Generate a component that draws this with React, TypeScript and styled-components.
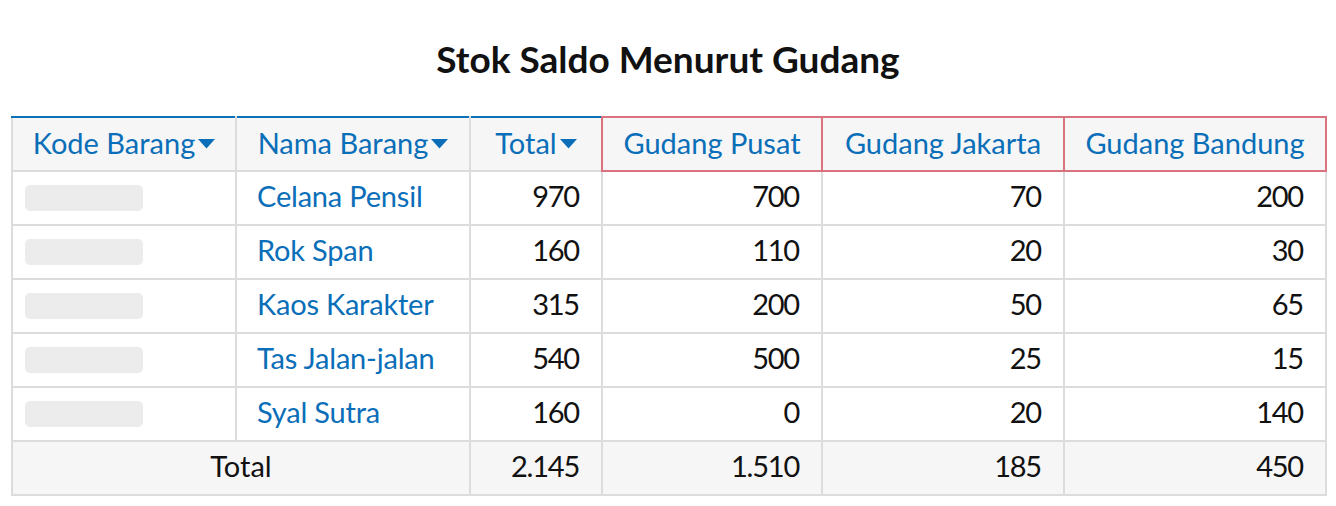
import styled, { createGlobalStyle } from "styled-components";

const GlobalStyle = createGlobalStyle`
    body {
        margin: 0;
        background: #ffffff;
        font-family: Lato, "Noto Sans", sans-serif;
    }
`

type Row = { nama: string; total: number; pusat: number; jakarta: number; bandung: number };

const rows: Row[] = [
    { nama: "Celana Pensil", total: 970, pusat: 700, jakarta: 70, bandung: 200 },
    { nama: "Rok Span", total: 160, pusat: 110, jakarta: 20, bandung: 30 },
    { nama: "Kaos Karakter", total: 315, pusat: 200, jakarta: 50, bandung: 65 },
    { nama: "Tas Jalan-jalan", total: 540, pusat: 500, jakarta: 25, bandung: 15 },
    { nama: "Syal Sutra", total: 160, pusat: 0, jakarta: 20, bandung: 140 },
];

const fmt = (n: number) => n.toLocaleString("de-DE");

const Caret = () => (
    <CaretIcon width="17" height="10" viewBox="0 0 17 10">
        <path d="M0 0 L17 0 L8.5 9.5 Z" fill="currentColor"/>
    </CaretIcon>
);

export default function App() {
    const sum = (k: keyof Omit<Row, "nama">) => rows.reduce((a, r) => a + r[k], 0);
    return (
        <Page>
            <GlobalStyle/>
            <Title>Stok Saldo Menurut Gudang</Title>
            <Table>
                <colgroup>
                    <col style={{width: 224}}/>
                    <col style={{width: 234}}/>
                    <col style={{width: 132}}/>
                    <col style={{width: 220}}/>
                    <col style={{width: 242}}/>
                    <col style={{width: 262}}/>
                </colgroup>
                <thead>
                    <tr>
                        <HeadCell>Kode Barang<Caret/></HeadCell>
                        <HeadCell>Nama Barang<Caret/></HeadCell>
                        <HeadCell>Total<Caret/></HeadCell>
                        <HeadCell $marked>Gudang Pusat</HeadCell>
                        <HeadCell $marked>Gudang Jakarta</HeadCell>
                        <HeadCell $marked>Gudang Bandung</HeadCell>
                    </tr>
                </thead>
                <tbody>
                    {rows.map((r) => (
                        <tr key={r.nama}>
                            <Cell><Placeholder/></Cell>
                            <Cell><ItemLink>{r.nama}</ItemLink></Cell>
                            <Cell $num>{r.total}</Cell>
                            <Cell $num>{r.pusat}</Cell>
                            <Cell $num>{r.jakarta}</Cell>
                            <Cell $num>{r.bandung}</Cell>
                        </tr>
                    ))}
                </tbody>
                <tfoot>
                    <tr>
                        <FootCell colSpan={2} $center>Total</FootCell>
                        <FootCell>{fmt(sum("total"))}</FootCell>
                        <FootCell>{fmt(sum("pusat"))}</FootCell>
                        <FootCell>{fmt(sum("jakarta"))}</FootCell>
                        <FootCell>{fmt(sum("bandung"))}</FootCell>
                    </tr>
                </tfoot>
            </Table>
        </Page>
    );
}

const Page = styled.div`
    padding: 34px 11px 0 11px;
`
const Title = styled.h1`
    margin: 0 0 32px 0;
    text-align: center;
    font-size: 37px;
    font-weight: 700;
    color: #111;
    line-height: 50px;
`
const Table = styled.table`
    width: 1314px;
    border-collapse: collapse;
    table-layout: fixed;
    border-top: 2px solid #0b72b9;
    font-size: 29px;
`
const HeadCell = styled.th<{ $marked?: boolean }>`
    height: 54px;
    padding: 0 16px 4px 16px;
    box-sizing: border-box;
    background: #f6f6f6;
    color: #0a6eb8;
    font-weight: 400;
    text-align: center;
    white-space: nowrap;
    border: 2px ${p => p.$marked ? "double #d9737d" : "solid #dcdcdc"};
    border-top-color: ${p => p.$marked ? "#d9737d" : "#0b72b9"};
`
const CaretIcon = styled.svg`
    margin-left: 3px;
    vertical-align: middle;
    position: relative;
    top: -2px;
`
const Cell = styled.td<{ $num?: boolean }>`
    height: 54px;
    padding: 0 22px 6px ${p => p.$num ? "20px" : "12px"};
    box-sizing: border-box;
    border: 2px solid #dcdcdc;
    color: #111;
    text-align: ${p => p.$num ? "right" : "left"};
    letter-spacing: ${p => p.$num ? "-1.2px" : "0"};
    white-space: nowrap;
`
const Placeholder = styled.div`
    width: 118px;
    height: 26px;
    border-radius: 5px;
    background: #ececec;
    position: relative;
    top: 3px;
`
const ItemLink = styled.span`
    color: #0a6eb8;
    margin-left: 8px;
    letter-spacing: -0.2px;
`
const FootCell = styled.td<{ $center?: boolean }>`
    height: 54px;
    padding: 0 22px 6px 22px;
    box-sizing: border-box;
    background: #f6f6f6;
    border: 2px solid #dcdcdc;
    color: #111;
    text-align: ${p => p.$center ? "center" : "right"};
    letter-spacing: ${p => p.$center ? "0" : "-1.2px"};
`
